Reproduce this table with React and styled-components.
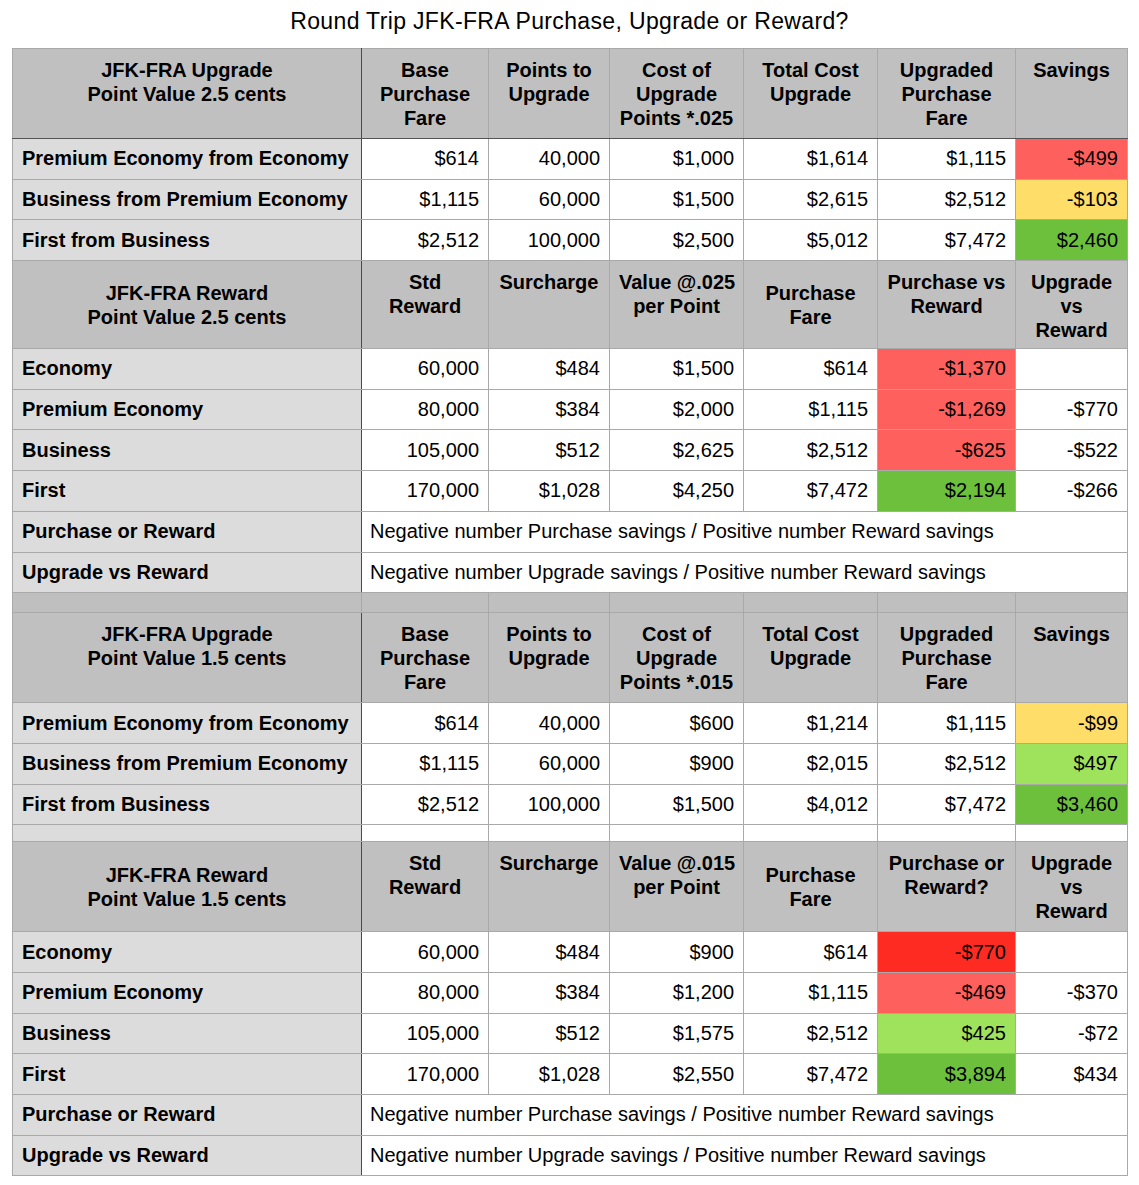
import React from "react";
import styled, { createGlobalStyle, css } from "styled-components";

const GlobalStyle = createGlobalStyle`
  body {
    margin: 0;
    background: #ffffff;
    font-family: "Liberation Sans", Arial, sans-serif;
    color: #000;
  }
`;

const FILLS = {
  red: "#fe615d",
  yellow: "#fedd69",
  green: "#6cc03c",
  lime: "#9fe25c",
  scarlet: "#fd2b22",
};

const Page = styled.div`
  width: 1139px;
  padding: 0 12px 10px 12px;
  box-sizing: border-box;
`;

const Title = styled.h1`
  margin: 0;
  height: 48px;
  padding-top: 7px;
  box-sizing: border-box;
  font-size: 23px;
  letter-spacing: 0.35px;
  font-weight: normal;
  text-align: center;
  line-height: 28px;
`;

const Sheet = styled.table`
  width: 1115px;
  border-collapse: collapse;
  table-layout: fixed;
  border: 1px solid #a3a3a3;
  font-size: 20px;
`;

const Row = styled.tr`
  height: ${(p) => p.$h}px;
`;

const cellBase = css`
  border: 1px solid #a9a9a9;
  padding: 0 9px;
  white-space: nowrap;
  overflow: hidden;
`;

const HeadCell = styled.th`
  ${cellBase};
  background: #c0c0c0;
  font-weight: bold;
  text-align: center;
  line-height: 24px;
  vertical-align: ${(p) => (p.$middle ? "middle" : "top")};
  padding-top: ${(p) => (p.$middle ? 0 : 9)}px;
  ${(p) => p.$firstHead && "border-bottom: 1px solid #555;"}
`;

const LabelCell = styled.td`
  ${cellBase};
  background: ${(p) => (p.$head ? "#c0c0c0" : "#dcdcdc")};
  border-right: 1px solid #4a4a4a;
  font-weight: bold;
  text-align: ${(p) => (p.$head ? "center" : "left")};
  line-height: 24px;
  vertical-align: ${(p) => (p.$head && !p.$middle ? "top" : "middle")};
  padding-top: ${(p) => (p.$head && !p.$middle ? 9 : 0)}px;
  padding-bottom: ${(p) => (p.$head ? 0 : 1)}px;
  ${(p) => p.$firstHead && "border-bottom: 1px solid #555;"}
`;

const NumCell = styled.td`
  ${cellBase};
  background: ${(p) => (p.$fill ? FILLS[p.$fill] : "#fff")};
  text-align: right;
  vertical-align: middle;
`;

const NoteCell = styled.td`
  ${cellBase};
  background: #fff;
  text-align: left;
  padding-left: 8px;
`;

const GapCell = styled.td`
  ${cellBase};
  background: ${(p) => (p.$grey ? "#bfbfbf" : p.$label ? "#dcdcdc" : "#fff")};
  ${(p) => p.$label && "border-right: 1px solid #4a4a4a;"}
`;

const Lines = ({ lines }) =>
  lines.map((l, i) => (
    <React.Fragment key={i}>
      {i > 0 && <br />}
      {l}
    </React.Fragment>
  ));

const upgradeHeads = (rate) => [
  { lines: ["Base", "Purchase", "Fare"] },
  { lines: ["Points to", "Upgrade"] },
  { lines: ["Cost of", "Upgrade", `Points *${rate}`] },
  { lines: ["Total Cost", "Upgrade"] },
  { lines: ["Upgraded", "Purchase", "Fare"] },
  { lines: ["Savings"] },
];

const rewardHeads = (rate, question) => [
  { lines: ["Std", "Reward"] },
  { lines: ["Surcharge"] },
  { lines: [`Value @${rate}`, "per Point"] },
  { lines: ["Purchase", "Fare"], middle: true },
  { lines: question ? ["Purchase or", "Reward?"] : ["Purchase vs", "Reward"] },
  { lines: ["Upgrade", "vs", "Reward"] },
];

const notes = [
  ["Purchase or Reward", "Negative number Purchase savings / Positive number Reward savings"],
  ["Upgrade vs Reward", "Negative number Upgrade savings / Positive number Reward savings"],
];

const sections = [
  {
    title: ["JFK-FRA Upgrade", "Point Value 2.5 cents"],
    middle: false,
    firstHead: true,
    h: 90,
    heads: upgradeHeads(".025"),
    rows: [
      ["Premium Economy from Economy", "$614", "40,000", "$1,000", "$1,614", "$1,115", ["-$499", "red"]],
      ["Business from Premium Economy", "$1,115", "60,000", "$1,500", "$2,615", "$2,512", ["-$103", "yellow"]],
      ["First from Business", "$2,512", "100,000", "$2,500", "$5,012", "$7,472", ["$2,460", "green"]],
    ],
  },
  {
    title: ["JFK-FRA Reward", "Point Value 2.5 cents"],
    middle: true,
    h: 88,
    heads: rewardHeads(".025", false),
    rows: [
      ["Economy", "60,000", "$484", "$1,500", "$614", ["-$1,370", "red"], ""],
      ["Premium Economy", "80,000", "$384", "$2,000", "$1,115", ["-$1,269", "red"], "-$770"],
      ["Business", "105,000", "$512", "$2,625", "$2,512", ["-$625", "red"], "-$522"],
      ["First", "170,000", "$1,028", "$4,250", "$7,472", ["$2,194", "green"], "-$266"],
    ],
    notes: true,
    after: "grey",
  },
  {
    title: ["JFK-FRA Upgrade", "Point Value 1.5 cents"],
    middle: false,
    h: 90,
    heads: upgradeHeads(".015"),
    rows: [
      ["Premium Economy from Economy", "$614", "40,000", "$600", "$1,214", "$1,115", ["-$99", "yellow"]],
      ["Business from Premium Economy", "$1,115", "60,000", "$900", "$2,015", "$2,512", ["$497", "lime"]],
      ["First from Business", "$2,512", "100,000", "$1,500", "$4,012", "$7,472", ["$3,460", "green"]],
    ],
    after: "blank",
  },
  {
    title: ["JFK-FRA Reward", "Point Value 1.5 cents"],
    middle: true,
    h: 90,
    heads: rewardHeads(".015", true),
    rows: [
      ["Economy", "60,000", "$484", "$900", "$614", ["-$770", "scarlet"], ""],
      ["Premium Economy", "80,000", "$384", "$1,200", "$1,115", ["-$469", "red"], "-$370"],
      ["Business", "105,000", "$512", "$1,575", "$2,512", ["$425", "lime"], "-$72"],
      ["First", "170,000", "$1,028", "$2,550", "$7,472", ["$3,894", "green"], "$434"],
    ],
    notes: true,
  },
];

const widths = [349, 127, 121, 134, 134, 138, 112];

export default function App() {
  return (
    <Page>
      <GlobalStyle />
      <Title>Round Trip JFK-FRA Purchase, Upgrade or Reward?</Title>
      <Sheet>
        <colgroup>
          {widths.map((w, i) => (
            <col key={i} style={{ width: w }} />
          ))}
        </colgroup>
        <tbody>
          {sections.map((s, si) => (
            <React.Fragment key={si}>
              <Row $h={s.h}>
                <LabelCell $head $middle={s.middle} $firstHead={s.firstHead}>
                  <Lines lines={s.title} />
                </LabelCell>
                {s.heads.map((hd, i) => (
                  <HeadCell key={i} $middle={hd.middle} $firstHead={s.firstHead}>
                    <Lines lines={hd.lines} />
                  </HeadCell>
                ))}
              </Row>
              {s.rows.map((r, ri) => (
                <Row $h={40.7} key={ri}>
                  <LabelCell>{r[0]}</LabelCell>
                  {r.slice(1).map((c, ci) =>
                    Array.isArray(c) ? (
                      <NumCell key={ci} $fill={c[1]}>
                        {c[0]}
                      </NumCell>
                    ) : (
                      <NumCell key={ci}>{c}</NumCell>
                    )
                  )}
                </Row>
              ))}
              {s.notes &&
                notes.map((n, ni) => (
                  <Row $h={40.7} key={`n${ni}`}>
                    <LabelCell>{n[0]}</LabelCell>
                    <NoteCell colSpan={6}>{n[1]}</NoteCell>
                  </Row>
                ))}
              {s.after && (
                <Row $h={s.after === "grey" ? 20 : 17}>
                  {widths.map((_, i) => (
                    <GapCell key={i} $grey={s.after === "grey"} $label={i === 0 && s.after !== "grey"} />
                  ))}
                </Row>
              )}
            </React.Fragment>
          ))}
        </tbody>
      </Sheet>
    </Page>
  );
}
